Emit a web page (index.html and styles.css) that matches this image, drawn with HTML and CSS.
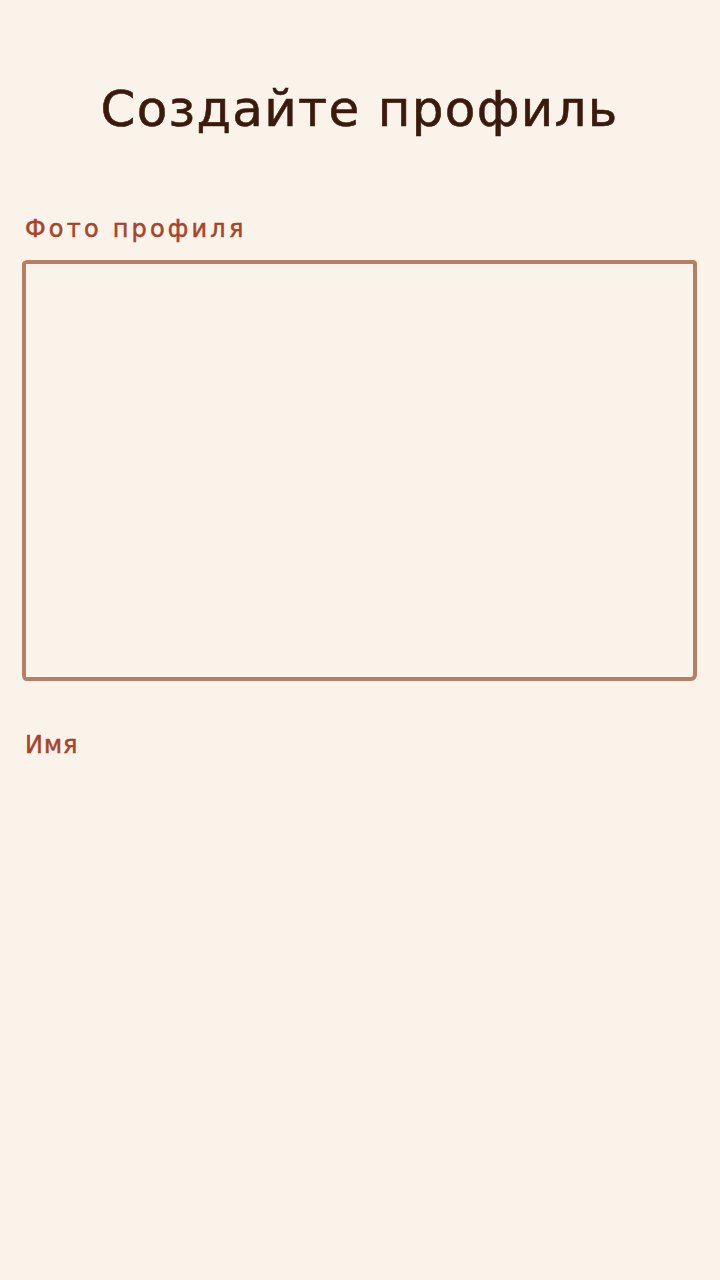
FILE: index.html
```html
<!DOCTYPE html>
<html lang="ru">
<head>
<meta charset="utf-8">
<link rel="stylesheet" href="styles.css">
</head>
<body>
<main class="page">
  <h1 class="title">Создайте профиль</h1>
  <section class="field">
    <div class="label label-wide">Фото профиля</div>
    <div class="photo-box"></div>
  </section>
  <section class="field">
    <div class="label">Имя</div>
  </section>
</main>
</body>
</html>
```
FILE: styles.css
```css
html, body {
  margin: 0;
  padding: 0;
  background: #faf3e9;
}
.page {
  box-sizing: border-box;
  width: 720px;
  min-height: 1280px;
  padding: 77px 23px 0 22px;
  display: flex;
  flex-direction: column;
  font-family: "DejaVu Sans", sans-serif;
}
.title {
  margin: 0;
  text-align: center;
  font-size: 50px;
  font-weight: 400;
  line-height: 64px;
  letter-spacing: 1.3px;
  color: #3b1a0e;
  -webkit-text-stroke: 0.6px #3b1a0e;
}
.field {
  display: flex;
  flex-direction: column;
}
.field:first-of-type {
  margin-top: 73px;
}
.label {
  padding-left: 3px;
  font-size: 24px;
  line-height: 30px;
  color: #a8432a;
  letter-spacing: 1px;
  -webkit-text-stroke: 0.5px #a8432a;
}
.label-wide {
  letter-spacing: 3.2px;
}
.photo-box {
  margin-top: 16px;
  height: 413px;
  border: 4px solid #b87f64;
  border-radius: 6px 4px 6px 4px / 4px 4px 6px 6px;
}
.field + .field {
  margin-top: 49px;
}
```
